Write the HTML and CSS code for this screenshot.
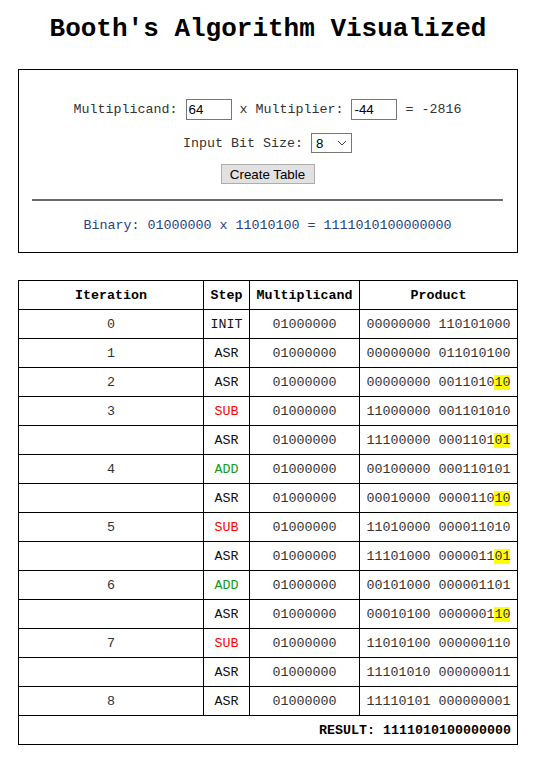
FILE: index.html
```html
<!DOCTYPE html>
<html>
<head>
<meta charset="utf-8">
<link rel="stylesheet" href="styles.css">
</head>
<body>
<div class="page">
  <h1 class="title">Booth's Algorithm Visualized</h1>
  <div class="panel">
    <div class="row row-inputs">
      <label class="lbl">Multiplicand:</label>
      <input class="num" type="text" value="64">
      <span class="lbl">x Multiplier:</span>
      <input class="num" type="text" value="-44">
      <span class="lbl">= -2816</span>
    </div>
    <div class="row row-bits">
      <label class="lbl">Input Bit Size:</label>
      <span class="select-wrap">
        <select class="bits"><option>8</option></select>
        <svg class="chev" width="10" height="6" viewBox="0 0 10 6"><path d="M1 1 L5 5 L9 1" fill="none" stroke="#444" stroke-width="1"/></svg>
      </span>
    </div>
    <div class="row row-btn">
      <button class="btn">Create Table</button>
    </div>
    <div class="rule"></div>
    <div class="row binary">Binary: 01000000 x 11010100 = 1111010100000000</div>
  </div>

  <table class="booth">
    <colgroup>
      <col class="c-it"><col class="c-step"><col class="c-mc"><col class="c-prod">
    </colgroup>
    <thead>
      <tr><th>Iteration</th><th>Step</th><th>Multiplicand</th><th>Product</th></tr>
    </thead>
    <tbody>
      <tr><td>0</td><td class="op">INIT</td><td>01000000</td><td>00000000 110101000</td></tr>
      <tr><td>1</td><td class="op">ASR</td><td>01000000</td><td>00000000 011010100</td></tr>
      <tr><td>2</td><td class="op">ASR</td><td>01000000</td><td>00000000 0011010<span class="hl">10</span></td></tr>
      <tr><td>3</td><td class="op sub">SUB</td><td>01000000</td><td>11000000 001101010</td></tr>
      <tr><td></td><td class="op">ASR</td><td>01000000</td><td>11100000 0001101<span class="hl">01</span></td></tr>
      <tr><td>4</td><td class="op add">ADD</td><td>01000000</td><td>00100000 000110101</td></tr>
      <tr><td></td><td class="op">ASR</td><td>01000000</td><td>00010000 0000110<span class="hl">10</span></td></tr>
      <tr><td>5</td><td class="op sub">SUB</td><td>01000000</td><td>11010000 000011010</td></tr>
      <tr><td></td><td class="op">ASR</td><td>01000000</td><td>11101000 0000011<span class="hl">01</span></td></tr>
      <tr><td>6</td><td class="op add">ADD</td><td>01000000</td><td>00101000 000001101</td></tr>
      <tr><td></td><td class="op">ASR</td><td>01000000</td><td>00010100 0000001<span class="hl">10</span></td></tr>
      <tr><td>7</td><td class="op sub">SUB</td><td>01000000</td><td>11010100 000000110</td></tr>
      <tr><td></td><td class="op">ASR</td><td>01000000</td><td>11101010 000000011</td></tr>
      <tr><td>8</td><td class="op">ASR</td><td>01000000</td><td>11110101 000000001</td></tr>
      <tr><td class="result" colspan="4">RESULT: 1111010100000000</td></tr>
    </tbody>
  </table>
</div>
</body>
</html>
```

FILE: styles.css
```css
html, body {
  margin: 0;
  padding: 0;
  background: #fff;
}
body {
  font-family: "Liberation Mono", "Courier New", monospace;
  font-size: 13.33px;
  color: #333;
}
.page {
  width: 500px;
  margin-left: 18px;
}
.title {
  margin: 14px 0 25px;
  height: 30px;
  line-height: 30px;
  font-size: 26px;
  font-weight: bold;
  text-align: center;
  color: #000;
}
.panel {
  border: 1px solid #000;
  padding: 0 14px 19px 13px;
  display: flex;
  flex-direction: column;
}
.row {
  display: flex;
  justify-content: center;
  align-items: center;
}
.row-inputs {
  margin-top: 29px;
  height: 21px;
  gap: 8px;
}
.lbl {
  white-space: pre;
}
.num {
  box-sizing: border-box;
  width: 46px;
  height: 21px;
  border: 1px solid #767676;
  padding: 1px 2px;
  font-family: "Liberation Sans", Arial, sans-serif;
  font-size: 13.33px;
  color: #000;
  margin: 0;
}
.row-bits {
  margin-top: 13px;
  height: 20px;
  gap: 8px;
}
.select-wrap {
  position: relative;
  display: inline-block;
  height: 20px;
}
.bits {
  -webkit-appearance: none;
  appearance: none;
  box-sizing: border-box;
  width: 41px;
  height: 20px;
  border: 1px solid #767676;
  border-radius: 0;
  background: #fff;
  padding: 0 0 0 4px;
  margin: 0;
  font-family: "Liberation Sans", Arial, sans-serif;
  font-size: 13.33px;
  color: #000;
}
.chev {
  position: absolute;
  right: 5px;
  top: 7px;
  pointer-events: none;
}
.row-btn {
  margin-top: 11px;
  height: 20px;
}
.btn {
  box-sizing: border-box;
  width: 94px;
  height: 20px;
  margin: 0;
  padding: 0;
  background: #e1e1e1;
  border: 1px solid #adadad;
  border-radius: 0;
  font-family: "Liberation Sans", Arial, sans-serif;
  font-size: 13.33px;
  color: #000;
}
.rule {
  margin-top: 15px;
  height: 2px;
  background: #6a6a6a;
}
.binary {
  margin-top: 16px;
  height: 16px;
  color: #27427f;
  white-space: pre;
}
.booth {
  margin-top: 27px;
  width: 499px;
  border-collapse: collapse;
  table-layout: fixed;
}
.c-it { width: 185px; }
.c-step { width: 46px; }
.c-mc { width: 110px; }
.c-prod { width: 158px; }
.booth th,
.booth td {
  border: 1px solid #000;
  height: 28px;
  padding: 0;
  text-align: center;
  vertical-align: middle;
  white-space: pre;
  font-weight: normal;
}
.booth th {
  font-weight: bold;
  color: #000;
}
.booth td.op {
  color: #111;
}
.booth td.sub { color: #f00; }
.booth td.add { color: #1a9a1a; }
.hl {
  background: #ffff00;
}
.booth td.result {
  text-align: right;
  padding-right: 6px;
  font-weight: bold;
  color: #000;
}
```
